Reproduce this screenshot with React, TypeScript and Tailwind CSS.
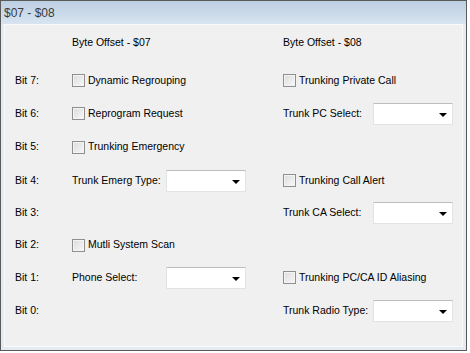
import React from 'react'

type Cell =
  | { kind: 'check'; label: string }
  | { kind: 'combo'; label: string }
  | null

interface Row {
  bit: string
  h: string
  left: Cell
  right: Cell
}

const rows: Row[] = [
  { bit: 'Bit 7:', h: 'h-[33px]', left: { kind: 'check', label: 'Dynamic Regrouping' }, right: { kind: 'check', label: 'Trunking Private Call' } },
  { bit: 'Bit 6:', h: 'h-[33px]', left: { kind: 'check', label: 'Reprogram Request' }, right: { kind: 'combo', label: 'Trunk PC Select:' } },
  { bit: 'Bit 5:', h: 'h-[34px]', left: { kind: 'check', label: 'Trunking Emergency' }, right: null },
  { bit: 'Bit 4:', h: 'h-[33px]', left: { kind: 'combo', label: 'Trunk Emerg Type:' }, right: { kind: 'check', label: 'Trunking Call Alert' } },
  { bit: 'Bit 3:', h: 'h-[32px]', left: null, right: { kind: 'combo', label: 'Trunk CA Select:' } },
  { bit: 'Bit 2:', h: 'h-[32px]', left: { kind: 'check', label: 'Mutli System Scan' }, right: null },
  { bit: 'Bit 1:', h: 'h-[33px]', left: { kind: 'combo', label: 'Phone Select:' }, right: { kind: 'check', label: 'Trunking PC/CA ID Aliasing' } },
  { bit: 'Bit 0:', h: 'h-[33px]', left: null, right: { kind: 'combo', label: 'Trunk Radio Type:' } },
]

const CheckBox = ({ label }: { label: string }) => (
  <label className="flex items-center gap-[3px]">
    <span className="w-[13px] h-[13px] border border-[#8f8f8f] bg-gradient-to-br from-[#dcdcdc] to-[#f8f8f8] shadow-[inset_0_0_0_1px_#f4f4f4]" />
    <span>{label}</span>
  </label>
)

const Combo = ({ label, lw }: { label: string; lw: string }) => (
  <div className="flex items-center">
    <span className={lw}>{label}</span>
    <div className="relative w-[80px] h-[22px] bg-white border border-[#e3e3e3] border-t-[#bdbdbd]">
      <span className="absolute right-[5px] top-[9px] w-0 h-0 border-l-[4px] border-r-[4px] border-t-[4px] border-l-transparent border-r-transparent border-t-black" />
    </div>
  </div>
)

const renderCell = (c: Cell, lw: string) => {
  if (!c) return null
  return c.kind === 'check' ? <CheckBox label={c.label} /> : <Combo label={c.label} lw={lw} />
}

export default function App() {
  return (
    <div className="w-[470px] h-[353px] bg-white">
      <div
        className="w-[467px] h-[351px] border border-[#5a5a5a] bg-[#e4ebf3] flex flex-col text-[10.5px] text-black"
        style={{ fontFamily: '"Liberation Sans", Arial, sans-serif' }}
      >
        <div className="h-[23px] flex items-center pl-[3px] bg-gradient-to-b from-[#bccfe2] to-[#d8e4f0] text-[12px] text-[#3a3a3a]">
          $07 - $08
        </div>
        <div className="flex-1 mx-[3px] mb-[3px] border border-[#fafafa] bg-[#f0f0f0]">
          <div className="flex h-[26px] items-end pl-[67px]">
            <span className="w-[211px]">Byte Offset - $07</span>
            <span>Byte Offset - $08</span>
          </div>
          <div className="h-[13px]" />
          {rows.map((r) => (
            <div key={r.bit} className={`flex items-center ${r.h}`}>
              <span className="w-[67px] pl-[10px]">{r.bit}</span>
              <div className="w-[211px]">{renderCell(r.left, 'w-[94px]')}</div>
              <div>{renderCell(r.right, 'w-[90px]')}</div>
            </div>
          ))}
        </div>
      </div>
    </div>
  )
}
